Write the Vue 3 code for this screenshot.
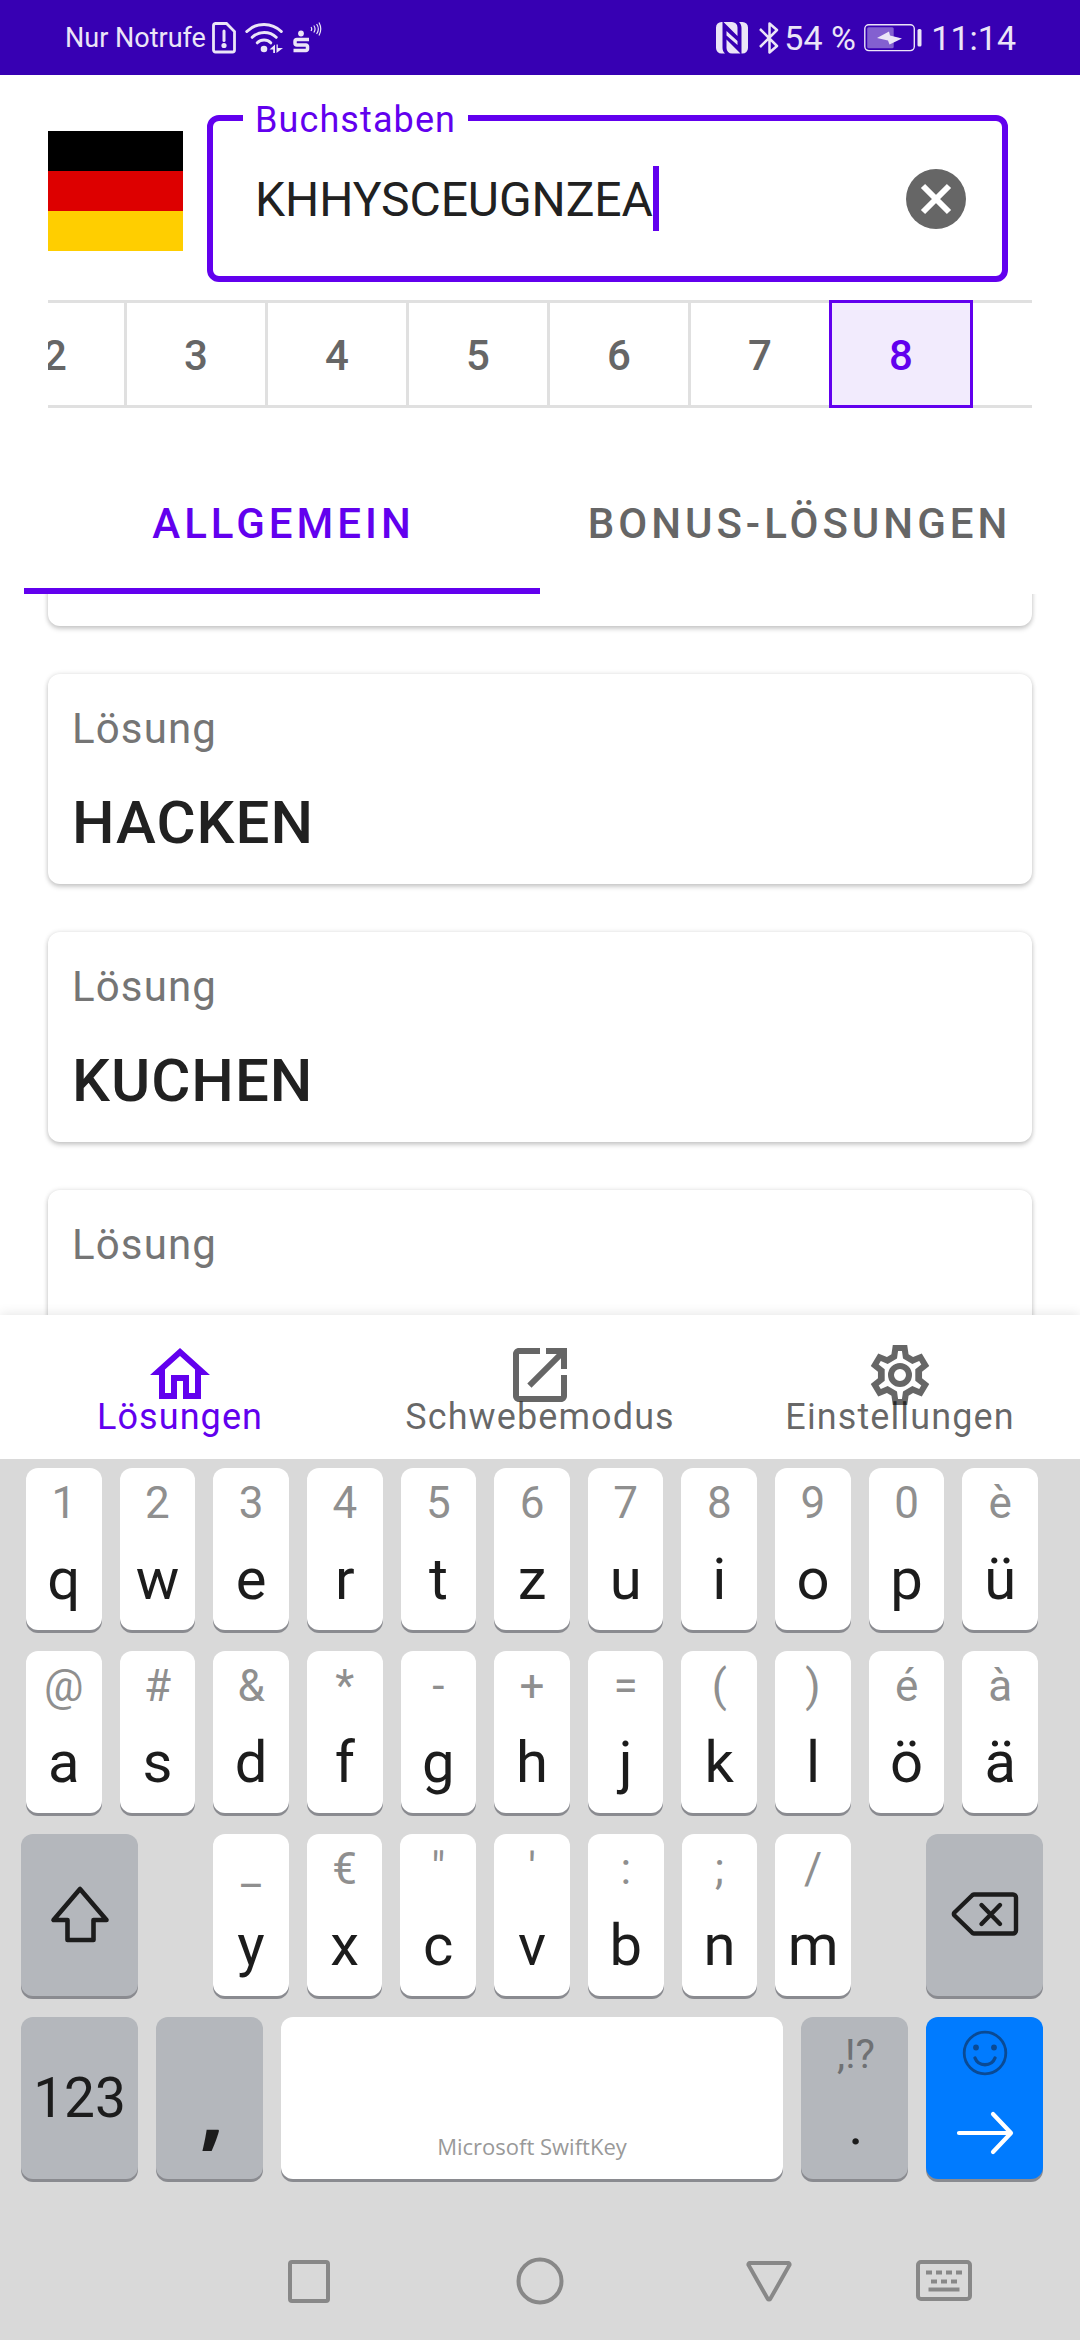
<template>
  <div class="screen">
    <header class="status-bar">
      <div class="status-left">
        <span class="carrier">Nur Notrufe</span>
        <svg class="sim-icon" viewBox="0 0 26 34">
          <path d="M4 2.500h11.500l8 8V29a2 2 0 0 1-2 2H4.500a2 2 0 0 1-2-2V4.500a2 2 0 0 1 2-2z" fill="none" stroke="currentColor" stroke-width="2.800" />
          <path d="M13 10v9.500" stroke="currentColor" stroke-width="3" stroke-linecap="round" />
          <circle cx="13" cy="24.500" r="2.600" fill="currentColor" />
        </svg>
        <svg class="wifi-icon" viewBox="0 0 38 34">
          <path d="M1.800 10.500c9.500-9.500 25-9.500 34.500 0M7.200 16.300c6.500-6.500 17.500-6.500 24 0M12.300 21.800c3.800-3.800 9.800-3.800 13.400 0" fill="none" stroke="currentColor" stroke-width="3" stroke-linecap="round" />
          <circle cx="19" cy="28" r="3.300" fill="currentColor" />
          <path d="M24.500 28.500l5.500-5v8.500h-1.800v-3.500zM38 27h-5.200v-3.500H31.500v8.500z" fill="currentColor" />
        </svg>
        <svg class="bank-icon" viewBox="0 0 30 34">
          <circle cx="9" cy="12.500" r="2.900" fill="currentColor" />
          <path d="M17 18.500H5a2 2 0 0 0-2 2v1.500a2 2 0 0 0 2 2h9a1.500 1.500 0 0 1 1.500 1.500v2.500a1.500 1.500 0 0 1-1.500 1.500H1.500" fill="none" stroke="currentColor" stroke-width="3.500" />
          <path d="M19 6q1.500 2 0 4M21.800 4.500q2.500 3.500 0 7M24.600 3q3.500 5 0 10M27 1.500q3.500 6.500 0 13" fill="none" stroke="currentColor" stroke-width="1.200" />
        </svg>
      </div>
      <div class="status-right">
        <svg class="nfc-icon" viewBox="0 0 32 32">
          <path d="M5.500 0h1v25.500c0 2.500.800 4.500 2.500 6H5.500A5.500 5.500 0 0 1 0 26V5.500A5.500 5.500 0 0 1 5.500 0zM26.500 31.500h-1V6c0-2.500-.800-4.500-2.500-6h3.500A5.500 5.500 0 0 1 32 5.500V26a5.500 5.500 0 0 1-5.500 5.500z" fill="currentColor" />
          <path d="M7.500 0h8.500a5.500 5.500 0 0 1 5.500 5.500V14zM24.500 31.500H16a5.500 5.500 0 0 1-5.500-5.500V17.500zM10.500 9l11 10v4l-11-9.500z" fill="currentColor" />
        </svg>
        <svg class="bt-icon" viewBox="0 0 20 32">
          <path d="M1 7l17 17-7.500 6.500V1.500L18 8 1 25" fill="none" stroke="currentColor" stroke-width="2.500" stroke-linejoin="round" />
        </svg>
        <span class="percent">54 %</span>
        <svg class="battery-icon" viewBox="0 0 58 28">
          <rect x=".800" y=".800" width="49.500" height="25.800" rx="4" fill="none" stroke="currentColor" stroke-width="1.400" />
          <rect x="3.200" y="3.200" width="26.500" height="21" rx="1.500" fill="#8360d0" />
          <path d="M13 14l12-6.500 1 4 12 3-12.500 6-1.500-4z" fill="currentColor" />
          <rect x="53.500" y="5" width="4" height="17.500" rx="1.500" fill="currentColor" />
        </svg>
        <span class="clock">11:14</span>
      </div>
    </header>

    <section class="search">
      <div class="flag">
        <span class="stripe black"></span>
        <span class="stripe red"></span>
        <span class="stripe gold"></span>
      </div>
      <div class="field">
        <label class="field-label">Buchstaben</label>
        <span class="field-value">{{ letters }}</span>
        <span class="caret"></span>
        <button class="clear-btn" type="button" aria-label="Löschen" @click="letters = ''">
          <svg viewBox="0 0 60 60">
            <circle cx="30" cy="30" r="30" fill="#666" />
            <path d="M17 17l26 26M43 17L17 43" stroke="#fff" stroke-width="6" />
          </svg>
        </button>
      </div>
    </section>

    <div class="lengths">
      <div class="lengths-track">
        <button
          v-for="n in lengths"
          :key="n"
          class="length-btn"
          type="button"
          :class="n === selectedLength ? 'active' : ''"
          @click="selectedLength = n"
        >{{ n }}</button>
      </div>
    </div>

    <nav class="tabs">
      <button
        v-for="tab in tabs"
        :key="tab"
        class="tab"
        type="button"
        :class="tab === activeTab ? 'active' : ''"
        @click="activeTab = tab"
      >{{ tab }}</button>
    </nav>

    <main class="results">
      <article v-for="(word, i) in solutions" :key="i" class="card">
        <div class="card-label">Lösung</div>
        <div class="card-word">{{ word }}</div>
      </article>
    </main>

    <nav class="bottom-nav">
      <button
        v-for="item in navItems"
        :key="item.label"
        class="nav-item"
        type="button"
        :class="item.active ? 'active' : ''"
      >
        <svg class="nav-icon" viewBox="0 0 24 24"><path :d="item.icon" fill="currentColor" /></svg>
        <span class="nav-label">{{ item.label }}</span>
      </button>
    </nav>

    <section class="keyboard">
      <div v-for="(row, r) in keyRows" :key="r" class="key-row">
        <button v-for="k in row" :key="k.main" class="key" type="button" @click="letters += k.main.toUpperCase()">
          <span class="key-hint">{{ k.hint }}</span>
          <span class="key-main">{{ k.main }}</span>
        </button>
      </div>

      <div class="key-row wide">
        <button class="key key-dark key-side" type="button" aria-label="Umschalt">
          <svg class="shift-icon" viewBox="0 0 60 58">
            <path d="M30 4L3.500 35H17.500v20h26V35H56.500z" fill="none" stroke="#1c1c1c" stroke-width="4.600" stroke-linejoin="round" />
          </svg>
        </button>
        <div class="key-group">
          <button v-for="k in thirdRow" :key="k.main" class="key" type="button" @click="letters += k.main.toUpperCase()">
            <span class="key-hint">{{ k.hint }}</span>
            <span class="key-main">{{ k.main }}</span>
          </button>
        </div>
        <button class="key key-dark key-side" type="button" aria-label="Rücktaste" @click="letters = letters.slice(0, -1)">
          <svg class="delete-icon" viewBox="0 0 68 46">
            <path d="M23 3.500h39a3 3 0 0 1 3 3v33a3 3 0 0 1-3 3H23a3 3 0 0 1-2-1L3.500 24.500a2 2 0 0 1 0-3L21 4.500a3 3 0 0 1 2-1z" fill="none" stroke="#1c1c1c" stroke-width="4.400" stroke-linejoin="round" />
            <path d="M30.500 14l18.500 19M49 14L30.500 33" stroke="#1c1c1c" stroke-width="4.400" stroke-linecap="round" />
          </svg>
        </button>
      </div>

      <div class="key-row wide">
        <button class="key key-dark key-side key-numbers" type="button">123</button>
        <button class="key key-dark key-punct key-comma" type="button">,</button>
        <button class="key key-space" type="button">Microsoft SwiftKey</button>
        <button class="key key-dark key-punct key-period" type="button">
          <span class="punct-hint">,!?</span>
          <span class="punct-main">.</span>
        </button>
        <button class="key key-enter key-side" type="button" aria-label="Weiter">
          <svg class="smile-icon" viewBox="0 0 46 46">
            <circle cx="23" cy="23" r="20.800" fill="none" stroke="#0a4a94" stroke-width="2.800" />
            <circle cx="14" cy="17.500" r="2.900" fill="#0a4a94" />
            <circle cx="32" cy="17.500" r="2.900" fill="#0a4a94" />
            <path d="M13 28c3.500 9 16.500 9 20 0" fill="none" stroke="#0a4a94" stroke-width="3.400" stroke-linecap="round" />
          </svg>
          <svg class="arrow-icon" viewBox="0 0 58 46">
            <path d="M3 23h51M37 4l18 19-18 19" fill="none" stroke="#fff" stroke-width="4.200" stroke-linecap="round" stroke-linejoin="round" />
          </svg>
        </button>
      </div>

      <div class="system-nav">
        <svg class="sys-icon" viewBox="0 0 48 48"><rect x="5" y="5" width="38" height="39" rx="2" /></svg>
        <svg class="sys-icon sys-home" viewBox="0 0 48 48"><circle cx="24" cy="24" r="21.500" /></svg>
        <svg class="sys-icon sys-back" viewBox="0 0 48 48"><path d="M4.500 6h39a1.500 1.500 0 0 1 1 2L25.200 42a1.500 1.500 0 0 1-2.400 0L3.500 8a1.500 1.500 0 0 1 1-2z" /></svg>
        <svg class="sys-icon sys-ime" viewBox="0 0 60 48">
          <rect x="4" y="5" width="52" height="37" rx="3" />
          <path d="M12 15.500h38" stroke-dasharray="6 4" />
          <path d="M17 24.500h26" stroke-dasharray="6 4" />
          <path d="M14.500 32.500h31" />
        </svg>
      </div>
    </section>
  </div>
</template>

<script setup>
import { ref } from 'vue'

const letters = ref('KHHYSCEUGNZEA')
const lengths = [2, 3, 4, 5, 6, 7, 8, 9]
const selectedLength = ref(8)

const tabs = ['ALLGEMEIN', 'BONUS-LÖSUNGEN']
const activeTab = ref(tabs[0])

// first and last entries are cut off by the scroll position
const solutions = ['', 'HACKEN', 'KUCHEN', '']

const navItems = [
  {
    label: 'Lösungen',
    active: true,
    icon: 'M12 5.690l5 4.500V18h-2v-6H9v6H7v-7.810l5-4.500M12 3L2 12h3v8h6v-6h2v6h6v-8h3L12 3z'
  },
  {
    label: 'Schwebemodus',
    active: false,
    icon: 'M19 19H5V5h7V3H5c-1.110 0-2 .900-2 2v14c0 1.100.890 2 2 2h14c1.100 0 2-.900 2-2v-7h-2v7zM14 3v2h3.590l-9.830 9.830 1.410 1.410L19 6.410V10h2V3h-7z'
  },
  {
    label: 'Einstellungen',
    active: false,
    icon: 'M9.600 2h4.800l.450 3.100 1.500.870 2.900-1.170 2.500 4.200-2.400 1.900v2.200l2.400 1.900-2.500 4.200-2.900-1.170-1.500.870L14.400 22H9.600l-.450-3.100-1.500-.870-2.900 1.170-2.500-4.200 2.400-1.900v-2.200L2.250 9l2.500-4.200 2.900 1.170 1.500-.870zM11.350 4l-.350 2.500L7.900 8.300 5.600 7.350l-.700 1.150 2 1.550v3.900l-2 1.550.700 1.150 2.300-.950 3.100 1.800.350 2.500h1.300l.350-2.500 3.100-1.800 2.300.950.700-1.150-2-1.550v-3.900l2-1.550-.700-1.150-2.300.950L13 6.500 12.650 4zM12 8a4 4 0 1 1 0 8 4 4 0 0 1 0-8zm0 2a2 2 0 1 0 0 4 2 2 0 0 0 0-4z'
  }
]

const makeRow = (mains, hints) => mains.map((main, i) => ({ main, hint: hints[i] }))

const keyRows = [
  makeRow([...'qwertzuiopü'], [...'1234567890è']),
  makeRow([...'asdfghjklöä'], [...'@#&*-+=()éà'])
]
const thirdRow = makeRow([...'yxcvbnm'], [...'_€"\':;/'])
</script>

<style>
body {
  margin: 0;
  background: #fff;
}
</style>

<style scoped>
.screen {
  width: 1080px;
  height: 2340px;
  overflow: hidden;
  display: flex;
  flex-direction: column;
  background: #fff;
  font-family: Roboto, "Liberation Sans", sans-serif;
}

button {
  margin: 0;
  padding: 0;
  border: 0;
  background: none;
  font-family: inherit;
  color: inherit;
  cursor: pointer;
}

svg {
  display: block;
  flex: none;
}

.status-bar {
  flex: none;
  height: 75px;
  padding: 0 64px 0 65px;
  display: flex;
  justify-content: space-between;
  align-items: center;
  background: #3700b3;
  color: #ebe5f7;
}

.status-left,
.status-right {
  display: flex;
  align-items: center;
  white-space: nowrap;
}

.carrier {
  width: 146px;
  font-size: 27px;
}

.sim-icon {
  width: 26px;
  height: 34px;
}

.wifi-icon {
  width: 38px;
  height: 34px;
  margin-left: 8px;
}

.bank-icon {
  width: 30px;
  height: 34px;
  margin-left: 9px;
}

.nfc-icon {
  width: 32px;
  height: 32px;
}

.bt-icon {
  width: 20px;
  height: 32px;
  margin-left: 11px;
}

.percent {
  width: 80px;
  margin-left: 5px;
  font-size: 34px;
}

.battery-icon {
  width: 58px;
  height: 28px;
}

.clock {
  margin-left: 9px;
  font-size: 34px;
}

.search {
  flex: none;
  height: 225px;
  box-sizing: border-box;
  padding: 40px 72px 0 48px;
  display: flex;
  align-items: flex-start;
  gap: 24px;
}

.flag {
  width: 135px;
  margin-top: 16px;
  display: flex;
  flex-direction: column;
}

.stripe {
  height: 40px;
}

.black {
  background: #000;
}

.red {
  background: #d00;
}

.gold {
  background: #ffce00;
}

.field {
  position: relative;
  flex: 1;
  height: 167px;
  box-sizing: border-box;
  padding: 0 36px 0 42px;
  display: flex;
  align-items: center;
  border: 6px solid #6200ee;
  border-radius: 12px;
}

.field-label {
  position: absolute;
  top: -22px;
  left: 30px;
  width: 225px;
  box-sizing: border-box;
  padding-left: 12px;
  background: #fff;
  color: #6200ee;
  font-size: 36px;
  line-height: 42px;
  letter-spacing: 1.100px;
}

.field-value {
  padding-top: 3px;
  color: #212121;
  font-size: 48px;
  line-height: 56px;
  letter-spacing: -0.080px;
}

.caret {
  width: 6px;
  height: 65px;
  background: #6200ee;
}

.clear-btn {
  width: 60px;
  height: 60px;
  margin-left: auto;
}

.lengths {
  flex: none;
  height: 108px;
  margin: 0 48px;
  overflow: hidden;
}

.lengths-track {
  display: flex;
  margin-left: -65px;
}

.length-btn {
  flex: none;
  box-sizing: border-box;
  width: 144px;
  height: 108px;
  margin-right: -3px;
  padding-top: 2px;
  border: 3px solid #e0e0e0;
  color: #666;
  font-size: 42px;
  font-weight: 500;
}

.length-btn:last-child {
  padding-left: 3px;
}

.length-btn.active {
  position: relative;
  border-color: #6200ee;
  background: #f2ebfd;
  color: #6200ee;
}

.tabs {
  flex: none;
  height: 144px;
  margin-top: 42px;
  padding: 0 24px;
  display: flex;
}

.tab {
  flex: 1;
  padding: 9px 0 0 3px;
  border-bottom: 6px solid transparent;
  color: #666;
  font-size: 42px;
  font-weight: 500;
  letter-spacing: 4px;
  white-space: nowrap;
}

.tab.active {
  border-bottom-color: #6200ee;
  color: #6200ee;
}

.results {
  flex: none;
  height: 721px;
  box-sizing: border-box;
  padding: 0 48px;
  overflow: hidden;
}

.card {
  height: 210px;
  box-sizing: border-box;
  margin-bottom: 48px;
  padding: 31px 24px 0;
  border-radius: 12px;
  background: #fff;
  box-shadow: 0 3px 5px rgba(0, 0, 0, 0.180), 0 0 5px rgba(0, 0, 0, 0.120);
}

.card:first-child {
  margin-top: -178px;
}

.card-label {
  color: #757575;
  font-size: 42px;
  line-height: 48px;
  letter-spacing: 1.150px;
}

.card-word {
  margin-top: 35px;
  color: #212121;
  font-size: 60px;
  font-weight: 500;
  line-height: 70px;
  letter-spacing: 1px;
}

.bottom-nav {
  position: relative;
  flex: none;
  height: 144px;
  display: flex;
  background: #fff;
  box-shadow: 0 0 12px rgba(0, 0, 0, 0.120);
}

.nav-item {
  flex: 1;
  padding-top: 24px;
  display: flex;
  flex-direction: column;
  align-items: center;
  color: rgba(0, 0, 0, 0.600);
}

.nav-item.active {
  color: #6200ee;
}

.nav-icon {
  width: 72px;
  height: 72px;
}

.nav-label {
  margin-top: -15px;
  font-size: 36px;
  line-height: 42px;
  letter-spacing: 1.100px;
}

.keyboard {
  position: relative;
  flex: 1;
  padding-top: 9px;
  display: flex;
  flex-direction: column;
  gap: 21px;
  background: #d9d9d9;
}

.key-row {
  height: 162px;
  padding: 0 42px 0 26px;
  display: flex;
  gap: 18px;
}

.key-row.wide {
  padding: 0 37px 0 21px;
}

.key {
  flex: 1;
  min-width: 0;
  padding-top: 13px;
  display: flex;
  flex-direction: column;
  align-items: center;
  border-radius: 12px;
  background: #fff;
  color: #1c1c1c;
  box-shadow: 0 3px 0 #8a8b90;
}

.key-group {
  width: 638px;
  margin: 0 auto 0 57px;
  display: flex;
  gap: 18px;
}

.key-hint {
  color: #8f8f8f;
  font-size: 44px;
  line-height: 44px;
}

.key-main {
  margin-top: 25px;
  font-size: 58px;
  line-height: 58px;
}

.key-dark {
  background: #b4b7bc;
}

.key-side {
  flex: none;
  width: 117px;
  padding-top: 0;
}

.shift-icon {
  width: 60px;
  height: 58px;
  margin-top: 51px;
}

.delete-icon {
  width: 68px;
  height: 46px;
  margin-top: 57px;
}

.key-numbers {
  padding-top: 50px;
  font-size: 55px;
  line-height: 62px;
  white-space: nowrap;
}

.key-punct {
  flex: none;
  width: 107px;
}

.key-comma {
  padding: 50px 0 0 5px;
  font-family: "Open Sans", "Noto Sans", sans-serif;
  font-size: 86px;
  font-weight: 700;
  line-height: 80px;
}

.key-space {
  justify-content: flex-end;
  padding: 0 0 19px;
  color: #999;
  font-family: "Open Sans", "Noto Sans", sans-serif;
  font-size: 22px;
  line-height: 28px;
}

.key-period {
  padding-left: 3px;
}

.punct-hint {
  color: #6f7174;
  font-size: 41px;
  line-height: 48px;
}

.punct-main {
  margin-top: 17px;
  font-size: 58px;
  line-height: 58px;
}

.key-enter {
  background: #007bff;
}

.smile-icon {
  width: 46px;
  height: 46px;
  margin-top: 13px;
}

.arrow-icon {
  width: 58px;
  height: 46px;
  margin-top: 34px;
}

.system-nav {
  padding: 57px 0 0 285px;
  display: flex;
}

.sys-icon {
  width: 48px;
  height: 48px;
  fill: none;
  stroke: #888;
  stroke-width: 4;
}

.sys-home {
  margin-left: 183px;
}

.sys-back {
  margin-left: 181px;
}

.sys-ime {
  width: 60px;
  margin-left: 121px;
}
</style>
